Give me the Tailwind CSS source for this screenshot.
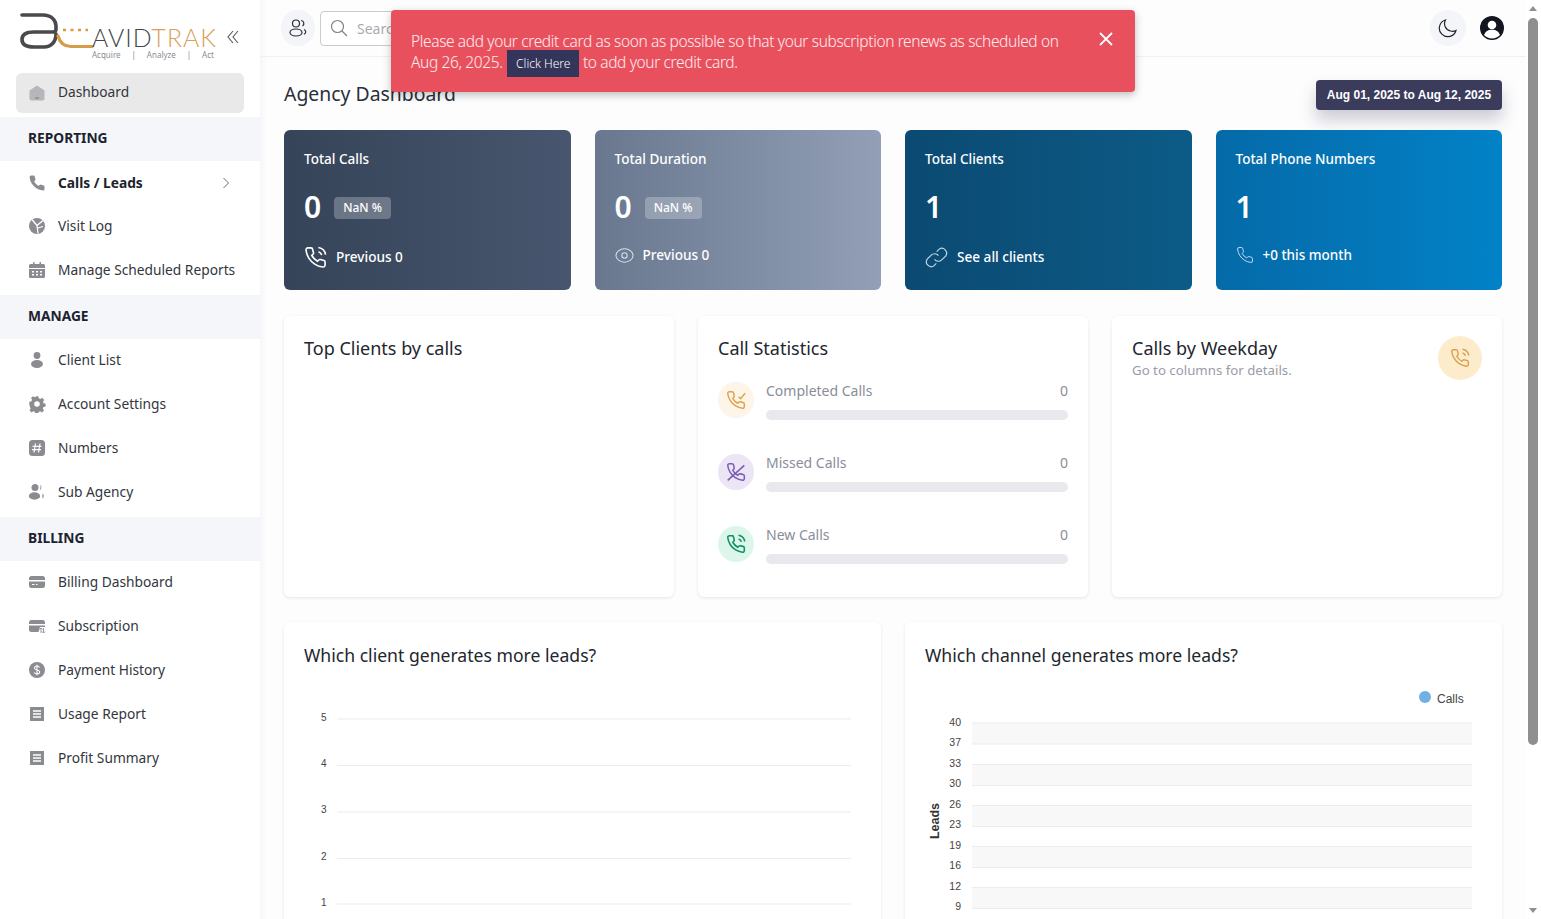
<!DOCTYPE html>
<html lang="en">
<head>
  <meta charset="UTF-8" />
  <title>AvidTrak Agency Dashboard</title>
  <script src="https://cdn.jsdelivr.net/npm/@tailwindcss/browser@4"></script>
</head>
<body class="h-screen overflow-hidden flex bg-[#fdfdfe] text-[#2b2f38] font-['Noto_Sans',sans-serif]">

  <!-- icon sprite -->
  <svg class="hidden">
    <symbol id="phone" viewBox="0 0 24 24"><path d="M22 16.92v3a2 2 0 0 1-2.18 2 19.79 19.79 0 0 1-8.63-3.07 19.5 19.5 0 0 1-6-6 19.79 19.79 0 0 1-3.07-8.67A2 2 0 0 1 4.11 2h3a2 2 0 0 1 2 1.72 12.84 12.84 0 0 0 .7 2.81 2 2 0 0 1-.45 2.11L8.09 9.91a16 16 0 0 0 6 6l1.27-1.27a2 2 0 0 1 2.11-.45 12.84 12.84 0 0 0 2.81.7A2 2 0 0 1 22 16.92z"/></symbol>
    <symbol id="phone-call" viewBox="0 0 24 24"><path d="M22 16.92v3a2 2 0 0 1-2.18 2 19.79 19.79 0 0 1-8.63-3.07 19.5 19.5 0 0 1-6-6 19.79 19.79 0 0 1-3.07-8.67A2 2 0 0 1 4.11 2h3a2 2 0 0 1 2 1.72 12.84 12.84 0 0 0 .7 2.81 2 2 0 0 1-.45 2.11L8.09 9.91a16 16 0 0 0 6 6l1.27-1.27a2 2 0 0 1 2.11-.45 12.84 12.84 0 0 0 2.81.7A2 2 0 0 1 22 16.92z"/><path d="M15.05 6A5 5 0 0 1 18.5 9.5M15.05 1.5A9 9 0 0 1 22.5 9"/></symbol>
    <symbol id="report" viewBox="0 0 18 18"><path d="M2 2h14v14H2z" fill="currentColor"/><path d="M5 6h8M5 9h8M5 12h8" stroke="#fff" stroke-width="1.3"/></symbol>
  </svg>

  <!-- sidebar -->
  <aside class="w-[260px] shrink-0 bg-white shadow-[2px_0_6px_rgba(60,70,100,0.05)] text-[13.75px] text-[#33363d]">
    <div class="h-[73px] relative">
      <svg class="w-[215px] h-[73px]" viewBox="0 0 215 73" fill="none">
        <path d="M22 15H43C51 15 56 20 56 26V29C56 31 55 32 53 32H34C26 32 22 35 22 39.5C22 44 26 47 34 47H44C51 47 56 42 56 34" stroke="#4a4a4c" stroke-width="3.6" stroke-linecap="round"/>
        <path d="M58 36C60 43 64 46.5 71 46.5H92" stroke="#d79a47" stroke-width="3.2" stroke-linecap="round"/>
        <path d="M63 30H88" stroke="#d79a47" stroke-width="2.6" stroke-dasharray="3 4.5"/>
      </svg>
      <div class="absolute left-[92px] top-[22px] font-['Lato',sans-serif] font-light text-[24.8px] leading-8 tracking-[1px] whitespace-nowrap"><span class="text-[#45474c]">AVID</span><span class="text-[#d9a05a]">TRAK</span></div>
      <div class="absolute left-[92px] top-[49px] w-[122px] flex justify-between text-[8px] leading-3 text-[#8b8d92]"><span>Acquire</span><span>|</span><span>Analyze</span><span>|</span><span>Act</span></div>
      <svg class="absolute left-[226px] top-[29px] w-[14px] h-[16px]" viewBox="0 0 14 16" fill="none" stroke="#55585e" stroke-width="1.1"><path d="M7 2L2 8l5 6M12 2L7 8l5 6"/></svg>
    </div>

    <a class="mx-4 h-10 flex items-center gap-3 pl-3 pb-0.5 rounded-md bg-[#e9e9e9] mb-1">
      <svg class="w-[18px] h-[18px] mt-0.5" viewBox="0 0 18 18"><path d="M9 1.5L16.5 6.5V14.5a2 2 0 0 1-2 2h-11a2 2 0 0 1-2-2V6.5z" fill="#b6b6bb"/><path d="M7 14h4" stroke="#77787d" stroke-width="1"/></svg>
      <span>Dashboard</span>
    </a>

    <div class="h-11 pb-0.5 flex items-center px-7 bg-[#f5f6fa] font-bold text-[#1c2230]">REPORTING</div>
    <a class="h-11 flex items-center gap-3 pl-7 pr-[30px] font-bold text-[#20232b]">
      <svg class="w-[18px] h-[18px] text-[#8b8c92]"><use href="#phone" fill="currentColor"/></svg>
      <span class="flex-1">Calls / Leads</span>
      <svg class="w-[8px] h-[12px]" viewBox="0 0 8 12" fill="none" stroke="#666a72"><path d="M1.5 1l5 5-5 5"/></svg>
    </a>
    <a class="h-11 pb-0.5 flex items-center gap-3 pl-7">
      <svg class="w-[18px] h-[18px]" viewBox="0 0 18 18"><circle cx="9" cy="9" r="8" fill="#8b8c92"/><path d="M4 2.5l5 6 6-5M9 8.5l1 8M10 11l5-1.5" fill="none" stroke="#fff" stroke-width="1.3"/></svg>
      <span>Visit Log</span>
    </a>
    <a class="h-11 pb-0.5 flex items-center gap-3 pl-7">
      <svg class="w-[18px] h-[18px]" viewBox="0 0 18 18" fill="#8b8c92"><path d="M1 4.5a1.5 1.5 0 0 1 1.5-1.5h13A1.5 1.5 0 0 1 17 4.5V7H1zM1 8h16v7.5a1.5 1.5 0 0 1-1.5 1.5h-13A1.5 1.5 0 0 1 1 15.5z"/><path d="M5 1h1.5v3H5zM11.5 1H13v3h-1.5z"/><path d="M4 10h2v1.5H4zM8 10h2v1.5H8zM12 10h2v1.5h-2zM4 13h2v1.5H4zM8 13h2v1.5H8zM12 13h2v1.5h-2z" fill="#fff"/></svg>
      <span>Manage Scheduled Reports</span>
    </a>

    <div class="h-11 pb-0.5 mt-0.5 flex items-center px-7 bg-[#f5f6fa] font-bold text-[#1c2230]">MANAGE</div>
    <a class="h-11 pb-0.5 flex items-center gap-3 pl-7">
      <svg class="w-[18px] h-[18px]" viewBox="0 0 18 18" fill="#8b8c92"><circle cx="9" cy="4.5" r="3.4"/><ellipse cx="9" cy="13" rx="6" ry="4"/></svg>
      <span>Client List</span>
    </a>
    <a class="h-11 pb-0.5 flex items-center gap-3 pl-7">
      <svg class="w-[18px] h-[18px]" viewBox="0 0 18 18"><path d="M7.5 1h3l.5 2.3 1.7.7 2-1.2 2 2.2-1.3 2 .7 1.5 2.1.6v3l-2.3.5-.6 1.6 1.2 2-2.1 2.1-2-1.2-1.6.7-.5 2.2h-3l-.5-2.3-1.6-.6-2 1.2-2.1-2.2 1.2-1.9-.7-1.7L.9 10V7l2.3-.5.7-1.6-1.2-2L4.8 1l2 1.2 1.6-.7z" fill="#8b8c92" transform="scale(.94) translate(.5 .2)"/><circle cx="9" cy="9" r="2.8" fill="#fff"/></svg>
      <span>Account Settings</span>
    </a>
    <a class="h-11 pb-0.5 flex items-center gap-3 pl-7">
      <svg class="w-[18px] h-[18px]" viewBox="0 0 18 18"><rect x="1" y="1" width="16" height="16" rx="3.5" fill="#8b8c92"/><path d="M7.5 4.5L6 13.5M12 4.5L10.5 13.5M4.5 7.3h9M4 10.7h9" stroke="#fff" stroke-width="1.2" fill="none"/></svg>
      <span>Numbers</span>
    </a>
    <a class="h-11 pb-0.5 flex items-center gap-3 pl-7">
      <svg class="w-[18px] h-[18px]" viewBox="0 0 18 18" fill="#8b8c92"><circle cx="7" cy="4.5" r="3.5"/><ellipse cx="6.5" cy="13" rx="5.7" ry="3.7"/><path d="M12 1.8a3.3 3.3 0 0 1 0 5.4 6 6 0 0 0 0-5.4zM14 10.5c2.5 1.3 2.5 3.8 0 5 .7-1.7.7-3.3 0-5z"/></svg>
      <span>Sub Agency</span>
    </a>

    <div class="h-11 pb-0.5 mt-0.5 flex items-center px-7 bg-[#f5f6fa] font-bold text-[#1c2230]">BILLING</div>
    <a class="h-11 pb-0.5 flex items-center gap-3 pl-7">
      <svg class="w-[18px] h-[18px]" viewBox="0 0 18 18" fill="#8b8c92"><path d="M1 5.5A2.5 2.5 0 0 1 3.5 3h11A2.5 2.5 0 0 1 17 5.5V7H1zM1 8.5h16v4A2.5 2.5 0 0 1 14.5 15h-11A2.5 2.5 0 0 1 1 12.5z"/><path d="M4 11.5h2.5M8 11.5h1.5" stroke="#fff" stroke-width="1"/></svg>
      <span>Billing Dashboard</span>
    </a>
    <a class="h-11 pb-0.5 flex items-center gap-3 pl-7">
      <svg class="w-[18px] h-[18px]" viewBox="0 0 18 18" fill="#8b8c92"><path d="M1 5.5A2.5 2.5 0 0 1 3.5 3h11A2.5 2.5 0 0 1 17 5.5V7H1zM1 8.5h16V10h-5l-1.5 5h-7A2.5 2.5 0 0 1 1 12.5z"/><path d="M13 11v5M11.5 12.5L13 11l1.5 1.5M15.5 16v-5M14 14.5l1.5 1.5 1.5-1.5" stroke="#8b8c92" stroke-width=".9" fill="none"/></svg>
      <span>Subscription</span>
    </a>
    <a class="h-11 pb-0.5 flex items-center gap-3 pl-7">
      <svg class="w-[18px] h-[18px]" viewBox="0 0 18 18"><circle cx="9" cy="9" r="8" fill="#8b8c92"/><path d="M11.5 6.5C11 5.3 10 5 9 5 7.5 5 6.5 5.8 6.5 7S7.5 8.7 9 9s2.7.8 2.7 2.1S10.5 13 9 13c-1.2 0-2.3-.5-2.7-1.6M9 3.7v10.6" stroke="#fff" stroke-width="1.1" fill="none"/></svg>
      <span>Payment History</span>
    </a>
    <a class="h-11 pb-0.5 flex items-center gap-3 pl-7">
      <svg class="w-[18px] h-[18px] text-[#8b8c92]"><use href="#report"/></svg>
      <span>Usage Report</span>
    </a>
    <a class="h-11 pb-0.5 flex items-center gap-3 pl-7">
      <svg class="w-[18px] h-[18px] text-[#8b8c92]"><use href="#report"/></svg>
      <span>Profit Summary</span>
    </a>
  </aside>

  <!-- main -->
  <main class="flex-1 min-w-0 overflow-hidden">
    <header class="h-[57px] border-b border-[#f0f1f4] flex items-center pl-[21px] pr-[22px]">
      <div class="w-[34px] h-[36px] rounded-full bg-[#f3f5f9] flex items-center justify-center">
        <svg class="w-[20px] h-[20px]" viewBox="0 0 20 20" fill="none" stroke="#2a2d35" stroke-width="1.2"><circle cx="8" cy="5.5" r="3.5"/><ellipse cx="8" cy="14.5" rx="6" ry="3.5"/><path d="M13 2.5a3 3 0 0 1 1.5 5.5M16 11.5c2.3 1.3 2.3 3.5 0 4.8"/></svg>
      </div>
      <div class="ml-[5px] w-[300px] h-[35px] border border-[#c9cbd0] rounded flex items-center pl-[9px] gap-[9px] bg-white">
        <svg class="w-[18px] h-[18px]" viewBox="0 0 18 18" fill="none" stroke="#80838a" stroke-width="1.2"><circle cx="7.5" cy="7.5" r="6"/><path d="M12 12l5 5"/></svg>
        <span class="text-sm text-[#a9abb0] mt-[1px]">Search</span>
      </div>
      <div class="flex-1"></div>
      <div class="w-[36px] h-[36px] rounded-full bg-[#f3f5f9] flex items-center justify-center">
        <svg class="w-[20px] h-[20px]" viewBox="0 0 20 20" fill="none" stroke="#23262e" stroke-width="1.2"><path d="M7.5 2A8.5 8.5 0 1 0 18 12.5 8 8 0 0 1 12.5 13 7.5 7.5 0 0 1 7.5 2z"/></svg>
      </div>
      <svg class="ml-[14px] w-[24px] h-[24px]" viewBox="0 0 24 24"><circle cx="12" cy="12" r="12" fill="#13161f"/><circle cx="12" cy="9" r="4.3" fill="#fff"/><path d="M4 19c1.5-4 4.5-5.3 8-5.3s6.5 1.3 8 5.3a11 11 0 0 1-16 0z" fill="#fff"/></svg>
    </header>

    <div class="px-6">
      <div class="h-[73px] flex items-end justify-between pb-[20px]">
        <h1 class="text-[19.4px] leading-[34px] -mb-[1px] text-[#2b2f38]">Agency Dashboard</h1>
        <div class="w-[186px] h-[30px] rounded bg-[#3b3b5c] text-white text-xs font-bold flex items-center justify-center shadow-[0_10px_16px_rgba(59,59,92,0.25)] font-['Liberation_Sans',sans-serif]">Aug 01, 2025 to Aug 12, 2025</div>
      </div>

      <!-- stat cards -->
      <section class="grid grid-cols-4 gap-6">
        <div class="h-[160px] rounded-md px-5 pt-[19px] text-white bg-gradient-to-r from-[#364459] to-[#47566e]">
          <div class="text-[13.5px] font-medium leading-5">Total Calls</div>
          <div class="mt-[17px] h-[40px] flex items-center gap-[13px]">
            <span class="text-[30px] font-semibold">0</span>
            <span class="mt-[3px] text-xs font-medium bg-white/25 rounded h-[22px] px-[9px] flex items-center">NaN %</span>
          </div>
          <div class="mt-[20px] flex items-center gap-[9px] text-[13.6px] font-medium">
            <svg class="w-[23px] h-[23px]" fill="none" stroke="#fff" stroke-width="1.7"><use href="#phone-call"/></svg>
            <span>Previous 0</span>
          </div>
        </div>
        <div class="h-[160px] rounded-md px-5 pt-[19px] text-white bg-gradient-to-r from-[#69788f] to-[#929fb7]">
          <div class="text-[13.5px] font-medium leading-5">Total Duration</div>
          <div class="mt-[17px] h-[40px] flex items-center gap-[13px]">
            <span class="text-[30px] font-semibold">0</span>
            <span class="mt-[3px] text-xs font-medium bg-white/25 rounded h-[22px] px-[9px] flex items-center">NaN %</span>
          </div>
          <div class="mt-[19px] flex items-center gap-[9px] text-[13.6px] font-medium">
            <svg class="w-[19px] h-[19px]" viewBox="0 0 20 20" fill="none" stroke="#dbe0e9" stroke-width="1.1"><ellipse cx="10" cy="10" rx="9" ry="7"/><circle cx="10" cy="10" r="2.8"/></svg>
            <span>Previous 0</span>
          </div>
        </div>
        <div class="h-[160px] rounded-md px-5 pt-[19px] text-white bg-gradient-to-r from-[#0b4a72] to-[#0c5b87]">
          <div class="text-[13.5px] font-medium leading-5">Total Clients</div>
          <div class="mt-[17px] h-[40px] flex items-center">
            <span class="text-[30px] font-semibold">1</span>
          </div>
          <div class="mt-[20px] flex items-center gap-[9px] text-[13.6px] font-medium">
            <svg class="w-[23px] h-[23px]" viewBox="0 0 24 24" fill="none" stroke="#c3d7e4" stroke-width="1.2"><path d="M10 14a5 5 0 0 0 7.5.5l4-4a5 5 0 0 0-7-7l-2.3 2.3"/><path d="M14 10a5 5 0 0 0-7.5-.5l-4 4a5 5 0 0 0 7 7l2.3-2.3"/></svg>
            <span>See all clients</span>
          </div>
        </div>
        <div class="h-[160px] rounded-md px-5 pt-[19px] text-white bg-gradient-to-r from-[#056aa8] to-[#0282c8]">
          <div class="text-[13.5px] font-medium leading-5">Total Phone Numbers</div>
          <div class="mt-[17px] h-[40px] flex items-center">
            <span class="text-[30px] font-semibold">1</span>
          </div>
          <div class="mt-[19px] flex items-center gap-[9px] text-[13.5px] font-medium">
            <svg class="w-[18px] h-[18px]" fill="none" stroke="#cfe6f4" stroke-width="1.2"><use href="#phone"/></svg>
            <span>+0 this month</span>
          </div>
        </div>
      </section>

      <!-- middle row -->
      <section class="mt-[26px] grid grid-cols-3 gap-6">
        <div class="h-[281px] rounded-md bg-white shadow-[0_1px_3px_rgba(40,50,80,0.12)] px-5 pt-5">
          <h2 class="text-lg leading-6 text-[#22262e]">Top Clients by calls</h2>
        </div>
        <div class="h-[281px] rounded-md bg-white shadow-[0_1px_3px_rgba(40,50,80,0.12)] px-5 pt-5">
          <h2 class="text-lg leading-6 text-[#22262e]">Call Statistics</h2>
          <div class="mt-[22px] flex flex-col gap-[36px]">
            <div class="flex gap-3 h-[36px]">
              <div class="w-9 h-9 rounded-full bg-[#fdf6e8] flex items-center justify-center">
                <svg class="w-[20px] h-[20px]" viewBox="0 0 24 24" fill="none" stroke="#e0a24c" stroke-width="1.8"><use href="#phone"/><path d="M15 8l2.500 2.500L23 4"/></svg>
              </div>
              <div class="flex-1 -mt-[1px]">
                <div class="flex justify-between text-sm leading-5 text-[#8a8d98]"><span>Completed Calls</span><span>0</span></div>
                <div class="mt-[9px] h-[10px] rounded-full bg-[#e9e9ed]"></div>
              </div>
            </div>
            <div class="flex gap-3 h-[36px]">
              <div class="w-9 h-9 rounded-full bg-[#ebe5f6] flex items-center justify-center">
                <svg class="w-[20px] h-[20px]" viewBox="0 0 24 24" fill="none" stroke="#7a5bb5" stroke-width="1.8"><use href="#phone"/><path d="M2 22L22 4"/></svg>
              </div>
              <div class="flex-1 -mt-[1px]">
                <div class="flex justify-between text-sm leading-5 text-[#8a8d98]"><span>Missed Calls</span><span>0</span></div>
                <div class="mt-[9px] h-[10px] rounded-full bg-[#e9e9ed]"></div>
              </div>
            </div>
            <div class="flex gap-3 h-[36px]">
              <div class="w-9 h-9 rounded-full bg-[#dcf6ec] flex items-center justify-center">
                <svg class="w-[20px] h-[20px]" fill="none" stroke="#12925f" stroke-width="1.9"><use href="#phone-call"/></svg>
              </div>
              <div class="flex-1 -mt-[1px]">
                <div class="flex justify-between text-sm leading-5 text-[#8a8d98]"><span>New Calls</span><span>0</span></div>
                <div class="mt-[9px] h-[10px] rounded-full bg-[#e9e9ed]"></div>
              </div>
            </div>
          </div>
        </div>
        <div class="h-[281px] rounded-md bg-white shadow-[0_1px_3px_rgba(40,50,80,0.12)] p-5 flex justify-between">
          <div>
            <h2 class="text-lg leading-6 text-[#22262e]">Calls by Weekday</h2>
            <p class="text-[13.25px] leading-5 text-[#9a9ca5]">Go to columns for details.</p>
          </div>
          <div class="w-[44px] h-[44px] rounded-full bg-[#fdeccb] flex items-center justify-center">
            <svg class="w-[20px] h-[20px]" fill="none" stroke="#d9a04e" stroke-width="1.7"><use href="#phone-call"/></svg>
          </div>
        </div>
      </section>

      <!-- bottom row -->
      <section class="mt-[25px] grid grid-cols-2 gap-6">
        <div class="h-[400px] rounded-md bg-white shadow-[0_1px_3px_rgba(40,50,80,0.12)]">
          <h2 class="px-5 pt-[21px] text-[17.6px] leading-6 text-[#22262e]">Which client generates more leads?</h2>
          <svg class="mt-[30px] block" width="597" height="300" viewBox="0 0 597 300" font-family="Liberation Sans, sans-serif" font-size="10" fill="#444">
            <path d="M53 22H567M53 68.5H567M53 115H567M53 161.5H567M53 207H567" stroke="#eaebef"/>
            <text x="37" y="24">5</text><text x="37" y="70">4</text><text x="37" y="116">3</text><text x="37" y="163">2</text><text x="37" y="209">1</text>
          </svg>
        </div>
        <div class="h-[400px] rounded-md bg-white shadow-[0_1px_3px_rgba(40,50,80,0.12)]">
          <h2 class="px-5 pt-[21px] text-[17.6px] leading-6 text-[#22262e]">Which channel generates more leads?</h2>
          <svg class="mt-[30px] block overflow-visible" width="597" height="300" viewBox="0 0 597 300" font-family="Liberation Sans, sans-serif" font-size="10.5" fill="#444">
            <g fill="#f8f8f8">
              <rect x="67" y="26" width="500" height="21"/><rect x="67" y="67.5" width="500" height="21"/><rect x="67" y="108.5" width="500" height="21"/><rect x="67" y="149.5" width="500" height="21"/><rect x="67" y="190.5" width="500" height="21"/>
            </g>
            <path d="M67 26H567M67 47H567M67 67.5H567M67 88.5H567M67 108.5H567M67 129.5H567M67 149.5H567M67 170.5H567M67 190.5H567M67 211.5H567" stroke="#ececef"/>
            <circle cx="520" cy="0" r="6" fill="#70b0e3"/>
            <text x="532" y="6" font-size="12">Calls</text>
            <g text-anchor="end">
              <text x="56" y="28.5">40</text><text x="56" y="48.5">37</text><text x="56" y="69.5">33</text><text x="56" y="89.5">30</text><text x="56" y="110.5">26</text><text x="56" y="130.5">23</text><text x="56" y="151.5">19</text><text x="56" y="171.5">16</text><text x="56" y="192.5">12</text><text x="56" y="212.5">9</text>
            </g>
            <text transform="translate(34 124) rotate(-90)" text-anchor="middle" font-size="12.5" font-weight="700" fill="#333">Leads</text>
          </svg>
        </div>
      </section>
    </div>
  </main>

  <!-- scrollbar -->
  <div class="w-[15px] shrink-0 bg-white flex flex-col items-center pt-[6px] pb-[6px]">
    <div class="w-0 h-0 border-x-[4px] border-x-transparent border-b-[5px] border-b-[#8f8f8f] ml-[-1px]"></div>
    <div class="mt-[7px] w-[10px] h-[727px] rounded-full bg-[#8f8f8f] ml-[-1px]"></div>
    <div class="flex-1"></div>
    <div class="w-0 h-0 border-x-[4px] border-x-transparent border-t-[5px] border-t-[#8f8f8f] ml-[-1px]"></div>
  </div>

  <!-- credit card alert -->
  <div class="absolute left-[391px] top-[10px] w-[744px] h-[82px] rounded bg-[#e9505e] text-white/90 shadow-[0_3px_8px_rgba(0,0,0,0.25)] pl-[20px] pr-[68px] pt-[21px]">
    <p class="font-light text-[15.5px] tracking-[-0.37px] leading-[21px]">Please add your credit card as soon as possible so that your subscription renews as scheduled on Aug 26, 2025. <a class="inline-block align-middle h-[27px] w-[72px] -my-[3px] ml-[1px] bg-[#33355a] text-white text-xs tracking-normal leading-[27px] text-center">Click Here</a> to add your credit card.</p>
    <svg class="absolute left-[708px] top-[22px] w-[14px] h-[14px]" viewBox="0 0 14 14" stroke="#fff" stroke-width="1.8"><path d="M1 1l12 12M13 1L1 13"/></svg>
  </div>
</body>
</html>
